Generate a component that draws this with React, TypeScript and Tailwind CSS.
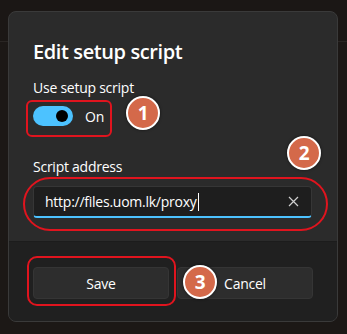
import React from 'react';

const font = { fontFamily: '"Segoe UI", "Open Sans", "Noto Sans", sans-serif' };

const Badge = ({ n, className }: { n: string; className: string }) => (
  <div
    className={`absolute w-[34px] h-[34px] rounded-full bg-[#d4694a] border-2 border-white flex items-center justify-center text-white text-[19px] font-bold shadow-[0_0_3px_rgba(0,0,0,0.6)] ${className}`}
  >
    {n}
  </div>
);

export default function App() {
  return (
    <div
      className="w-[347px] h-[334px] bg-[linear-gradient(to_bottom,#1b1715_0,#1b1715_41px,#2a2624_41px,#2a2624_42px,#1c1816_42px)] pt-[11px] pl-[8px] overflow-hidden tracking-[-0.25px]"
      style={font}
    >
      <div className="relative w-[330px] h-[311px]">
        <div className="w-full h-full rounded-lg border border-[#3a3a3a] bg-[#2b2b2b] flex flex-col overflow-hidden">
          {/* Body */}
          <div className="h-[229px] px-[24px] pt-[26px]">
            <h1 className="text-[20px] leading-[28px] font-semibold text-white tracking-[-0.4px]">Edit setup script</h1>
            <div className="mt-[12px] text-[14px] leading-[20px] text-white">Use setup script</div>
            <div className="mt-[8px] flex items-center gap-3 h-[20px]">
              <div className="w-10 h-5 rounded-full bg-[#4cc2ff] flex items-center justify-end pr-[5px]">
                <div className="w-3 h-3 rounded-full bg-black" />
              </div>
              <span className="text-[14px] text-white">On</span>
            </div>
            <div className="mt-[31px] text-[14px] leading-[20px] text-white">Script address</div>
            <div className="mt-[9px] w-[279px] h-[32px] rounded-[4px] bg-[#1e1e1e] border border-[#363636] border-b-2 border-b-[#4cc2ff] flex items-center pl-[11px] pr-[12px]">
              <span className="text-[14px] text-white">http://files.uom.lk/proxy</span>
              <span className="w-px h-[18px] bg-white ml-px" />
              <svg className="ml-auto" width="11" height="11" viewBox="0 0 11 11" fill="none" stroke="#cfcfcf" strokeWidth="1.2">
                <path d="M1 1L10 10M10 1L1 10" />
              </svg>
            </div>
          </div>
          {/* Footer */}
          <div className="flex-1 bg-[#202020] border-t border-[#1c1c1c] px-[24px] pt-[25px] flex gap-2">
            <button className="w-[136px] h-[32px] rounded-[4px] bg-[#2d2d2d] border border-[#353535] text-white text-[14px]">Save</button>
            <button className="w-[136px] h-[32px] rounded-[4px] bg-[#2d2d2d] border border-[#353535] text-white text-[14px]">Cancel</button>
          </div>
        </div>

        {/* Annotations */}
        <div className="absolute left-[18px] top-[89px] w-[86px] h-[37px] rounded-md border-2 border-[#e0141e]" />
        <div className="absolute left-[15px] top-[166px] w-[305px] h-[54px] rounded-full border-2 border-[#e0141e]" />
        <div className="absolute left-[19px] top-[245px] w-[149px] h-[50px] rounded-[10px] border-2 border-[#e0141e]" />
        <Badge n="1" className="left-[118px] top-[85px]" />
        <Badge n="2" className="left-[279px] top-[125px]" />
        <Badge n="3" className="left-[175px] top-[254px]" />
      </div>
    </div>
  );
}
